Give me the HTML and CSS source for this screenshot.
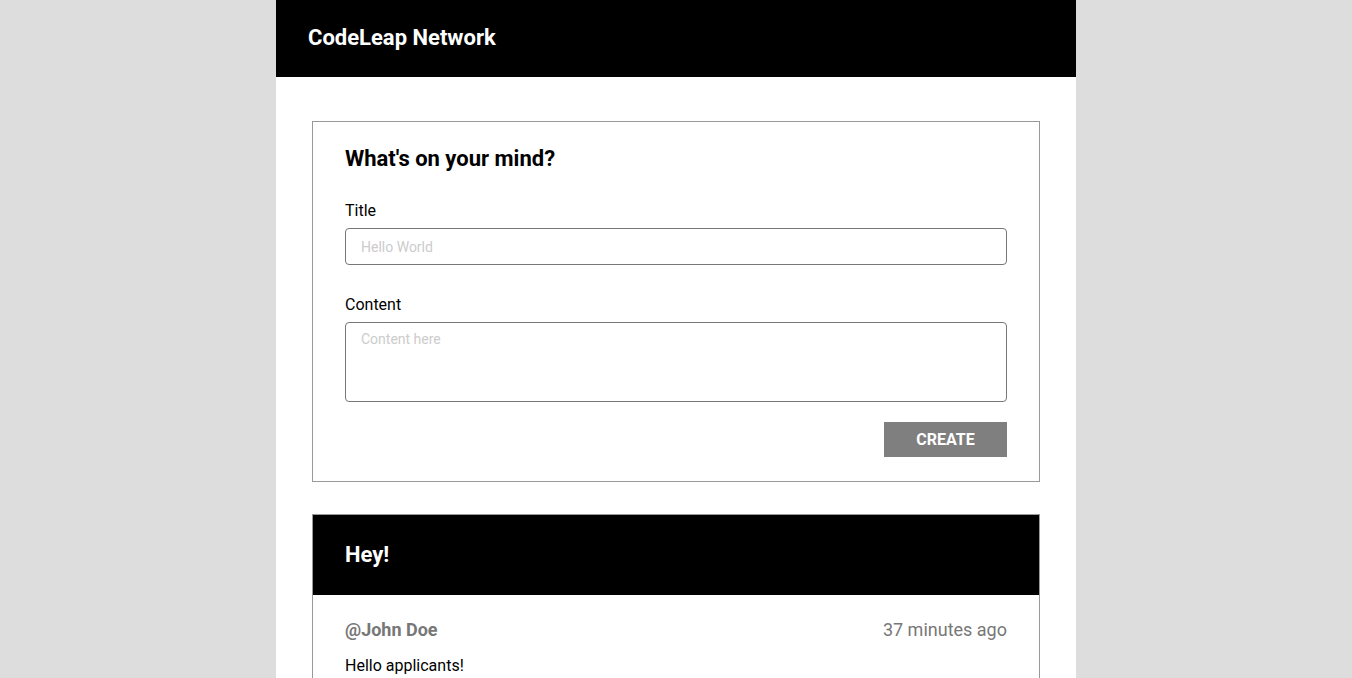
FILE: index.html
```html
<!DOCTYPE html>
<html lang="en">
<head>
<meta charset="utf-8">
<title>CodeLeap Network</title>
<link rel="stylesheet" href="styles.css">
</head>
<body>
<div class="app">
  <header class="topbar">CodeLeap Network</header>
  <main class="feed">
    <section class="card compose">
      <h2 class="compose-title">What's on your mind?</h2>
      <label class="field-label" for="title">Title</label>
      <input class="field-input" id="title" type="text" placeholder="Hello World">
      <label class="field-label second" for="content">Content</label>
      <textarea class="field-area" id="content" placeholder="Content here"></textarea>
      <div class="actions">
        <button class="btn-create" type="button">CREATE</button>
      </div>
    </section>
    <article class="card post">
      <div class="post-head">Hey!</div>
      <div class="post-body">
        <div class="post-meta">
          <span class="post-user">@John Doe</span>
          <span class="post-time">37 minutes ago</span>
        </div>
        <p class="post-text">Hello applicants!</p>
      </div>
    </article>
  </main>
</div>
</body>
</html>
```

FILE: styles.css
```css
* { box-sizing: border-box; }
html, body { margin: 0; padding: 0; }
body {
  background: #dddddd;
  font-family: Roboto, "Liberation Sans", sans-serif;
  color: #000;
}
.app {
  width: 800px;
  margin: 0 auto;
  background: #fff;
  min-height: 100vh;
}
.topbar {
  height: 77px;
  background: #000;
  color: #fff;
  font-size: 22px;
  font-weight: 700;
  line-height: 26px;
  padding: 25px 32px 0;
}
.feed {
  padding: 44px 36px 0;
  display: flex;
  flex-direction: column;
  gap: 32px;
}
.card {
  border: 1px solid #999;
  background: #fff;
}
.compose {
  padding: 24px 32px 24px;
  display: flex;
  flex-direction: column;
}
.compose-title {
  margin: 0 0 29px;
  font-size: 22px;
  line-height: 26px;
  font-weight: 700;
}
.field-label {
  display: block;
  font-size: 16px;
  line-height: 19px;
  margin-bottom: 8px;
}
.field-label.second { margin-top: 30px; }
.field-input,
.field-area {
  width: 100%;
  border: 1px solid #777;
  border-radius: 4px;
  font-family: Roboto, "Liberation Sans", sans-serif;
  font-size: 14px;
  color: #000;
  outline: none;
  background: #fff;
}
.field-input {
  height: 37px;
  padding: 0 15px;
}
.field-area {
  height: 80px;
  padding: 8px 15px;
  resize: none;
  line-height: 16px;
  display: block;
}
.field-input::placeholder,
.field-area::placeholder { color: #cccccc; }
.actions {
  display: flex;
  justify-content: flex-end;
  margin-top: 20px;
}
.btn-create {
  width: 123px;
  height: 35px;
  border: none;
  background: #7f7f7f;
  color: #fff;
  font-family: Roboto, "Liberation Sans", sans-serif;
  font-size: 16px;
  font-weight: 700;
  padding: 0;
}
.post-head {
  height: 80px;
  background: #000;
  color: #fff;
  font-size: 22px;
  font-weight: 700;
  line-height: 26px;
  padding: 27px 32px 0;
}
.post-body {
  padding: 24px 32px 24px;
}
.post-meta {
  display: flex;
  justify-content: space-between;
  align-items: baseline;
  font-size: 18px;
  line-height: 21px;
  color: #777;
}
.post-user { font-weight: 700; }
.post-text {
  margin: 16px 0 0;
  font-size: 16px;
  line-height: 19px;
}
```
